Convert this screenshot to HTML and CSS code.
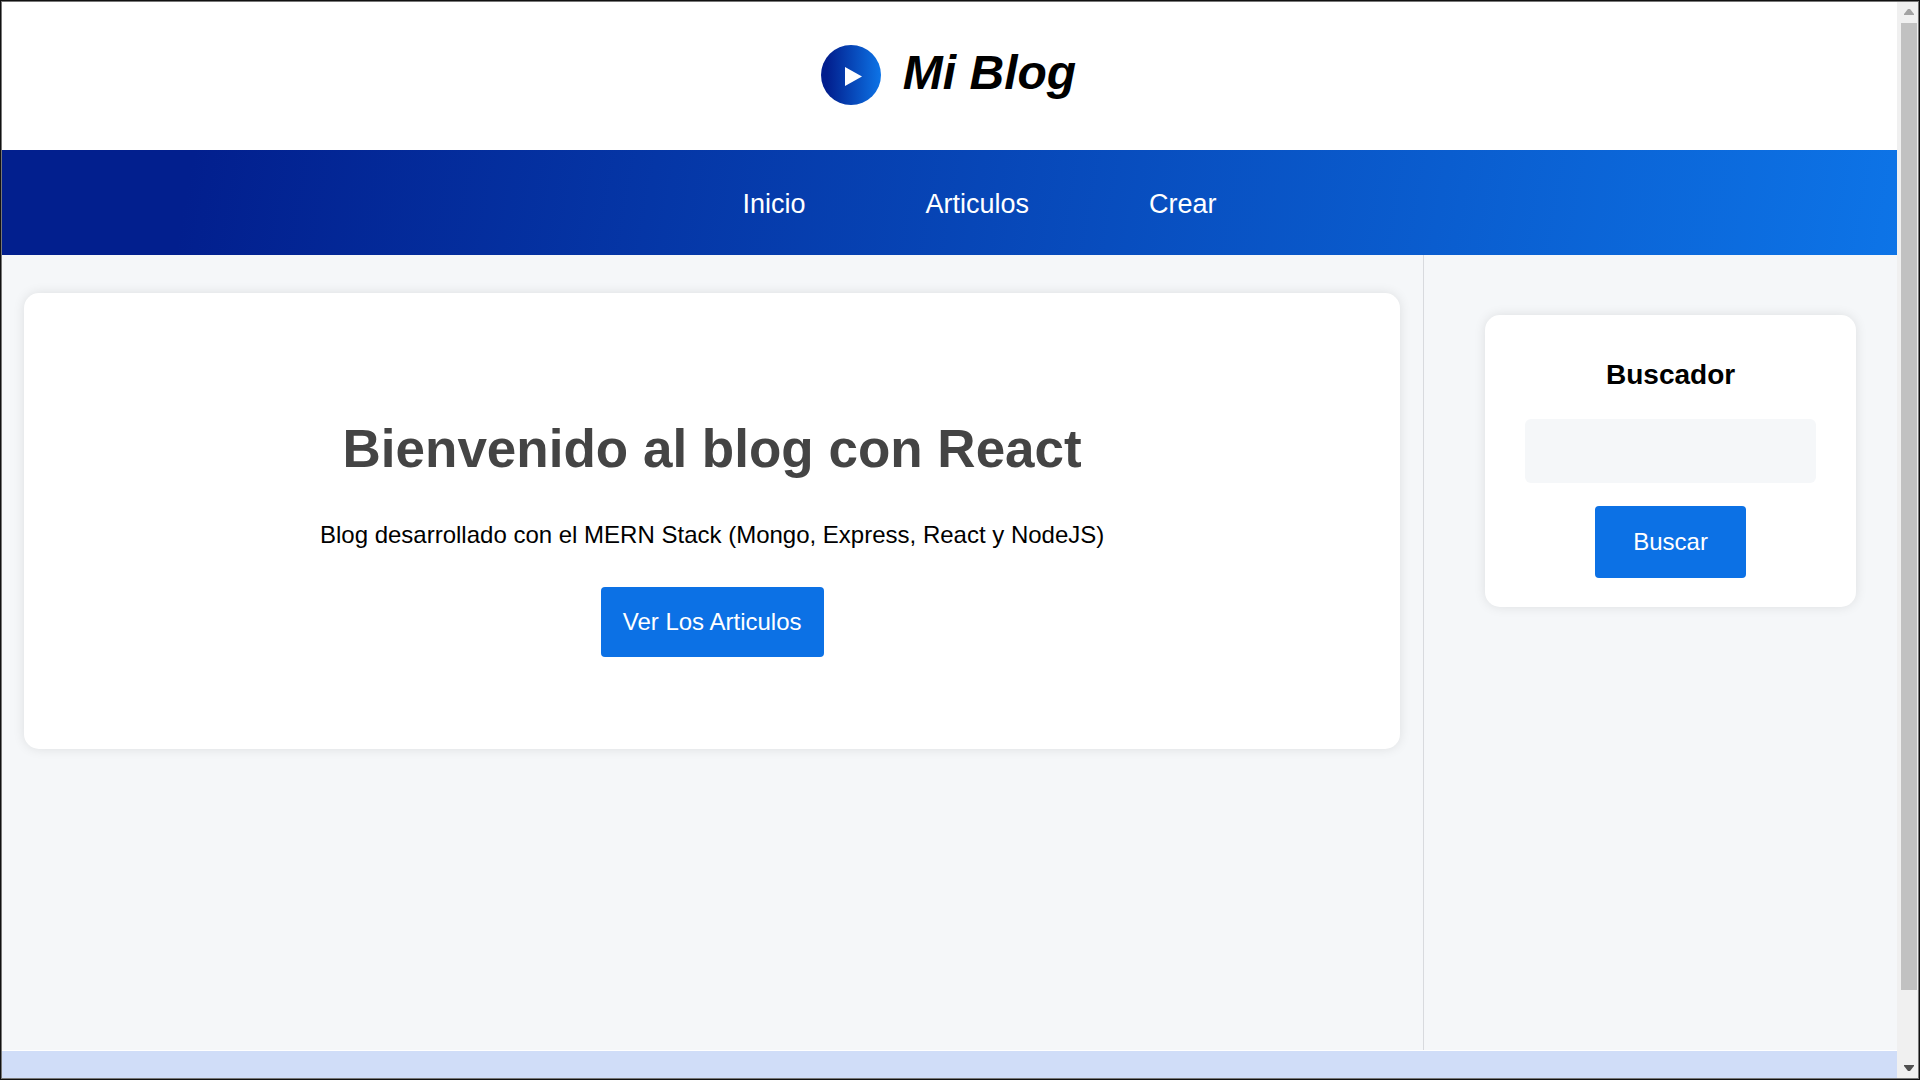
FILE: index.html
```html
<!DOCTYPE html>
<html lang="es">
<head>
<meta charset="utf-8">
<title>Mi Blog</title>
<link rel="stylesheet" href="styles.css">
</head>
<body>
<div class="window">
  <div class="page">
    <header class="header">
      <div class="logo" aria-hidden="true">
        <svg class="logo-icon" viewBox="0 0 60 60"><path d="M24 22 41 31.500 24 41Z" fill="#fff"/></svg>
      </div>
      <h1 class="brand">Mi Blog</h1>
    </header>
    <nav class="nav">
      <ul class="nav-list">
        <li><a class="nav-link" href="#inicio">Inicio</a></li>
        <li><a class="nav-link" href="#articulos">Articulos</a></li>
        <li><a class="nav-link" href="#crear">Crear</a></li>
      </ul>
    </nav>
    <div class="layout">
      <main class="content">
        <section class="card welcome">
          <h2 class="welcome-title">Bienvenido al blog con React</h2>
          <p class="welcome-text">Blog desarrollado con el MERN Stack (Mongo, Express, React y NodeJS)</p>
          <a class="button" href="#articulos">Ver Los Articulos</a>
        </section>
      </main>
      <aside class="sidebar">
        <form class="card search">
          <label class="search-title" for="search">Buscador</label>
          <input class="search-field" id="search" type="text">
          <button class="button search-button" type="button">Buscar</button>
        </form>
      </aside>
    </div>
    <footer class="footer"></footer>
  </div>
  <div class="scrollbar" aria-hidden="true">
    <svg class="arrow" viewBox="0 0 10 6"><path d="M0 6V5L4 0H6L10 5V6Z" fill="#a3a3a3"/></svg>
    <div class="track"><div class="thumb"></div></div>
    <svg class="arrow" viewBox="0 0 10 6"><path d="M0 0V1L4 6H6L10 1V0Z" fill="#505050"/></svg>
  </div>
</div>
</body>
</html>
```
FILE: styles.css
```css
* {
  box-sizing: border-box;
}

body {
  margin: 0;
  font-family: "Liberation Sans", Arial, sans-serif;
  font-size: 24px;
  color: #000;
}

h1, h2, p, ul {
  margin: 0;
  padding: 0;
}

.window {
  display: flex;
  height: 100vh;
  overflow: hidden;
  border: 1px solid #111;
  outline: 1px solid #777;
  outline-offset: -2px;
  padding: 1px;
}

.page {
  flex: 1;
  display: flex;
  flex-direction: column;
}

.header {
  display: flex;
  justify-content: center;
  align-items: center;
  gap: 22px;
  height: 148px;
  padding: 0 2px 2px 0;
  background: #fff;
}

.logo {
  width: 60px;
  height: 60px;
  border-radius: 50%;
  background: linear-gradient(90deg, #021f8e 10%, #0d74e7 100%);
}

.logo-icon {
  display: block;
}

.brand {
  font-size: 48px;
  line-height: 56px;
  font-style: italic;
  padding-bottom: 4px;
}

.nav {
  display: flex;
  justify-content: center;
  align-items: center;
  height: 105px;
  padding-top: 2px;
  background: linear-gradient(100deg, #021f8e 10%, #0d74e7 100%);
}

.nav-list {
  display: flex;
  list-style: none;
  padding-left: 60px;
}

.nav-link {
  display: block;
  padding: 0 60px;
  font-size: 27px;
  line-height: 32px;
  color: #fff;
  text-decoration: none;
}

.layout {
  flex: 1;
  display: grid;
  grid-template-columns: 3fr 1fr;
  background: #f5f7f9;
}

.content {
  padding: 38px 23px 38px 22px;
}

.card {
  display: flex;
  flex-direction: column;
  align-items: center;
  background: #fff;
  border-radius: 15px;
  box-shadow: 0 0 12px rgba(0, 0, 0, 0.1);
}

.welcome {
  height: 456px;
  padding-top: 125px;
}

.welcome-title {
  font-size: 53px;
  line-height: 62px;
  color: #444;
}

.welcome-text {
  margin: 41px 0 38px;
  line-height: 28px;
}

.button {
  height: 70px;
  padding: 0 22px;
  border: 0;
  border-radius: 4px;
  background: #0c71e5;
  color: #fff;
  font-family: inherit;
  font-size: 24px;
  line-height: 70px;
  text-decoration: none;
}

.sidebar {
  border-left: 1px solid #d8dade;
  padding: 60px 41px 60px 61px;
}

.search {
  height: 292px;
  padding: 44px 40px 0;
}

.search-title {
  font-size: 28px;
  line-height: 32px;
  font-weight: bold;
}

.search-field {
  width: 100%;
  height: 64px;
  margin: 28px 0 23px;
  padding: 0 15px;
  border: 0;
  border-radius: 6px;
  background: #f5f7f9;
  font: inherit;
}

.search-button {
  height: 72px;
  padding: 0 38px;
}

.footer {
  height: 28px;
  border-top: 1px solid #fff;
  background: #d0ddf8;
}

.scrollbar {
  display: flex;
  flex-direction: column;
  align-items: center;
  width: 21px;
  padding: 7px 1px 7px 4px;
  background: #f0f0f0;
}

.arrow {
  width: 10px;
  height: 6px;
}

.track {
  flex: 1;
  width: 16px;
  padding: 8px 0 75px;
}

.thumb {
  height: 100%;
  background: #c1c1c1;
}
```
